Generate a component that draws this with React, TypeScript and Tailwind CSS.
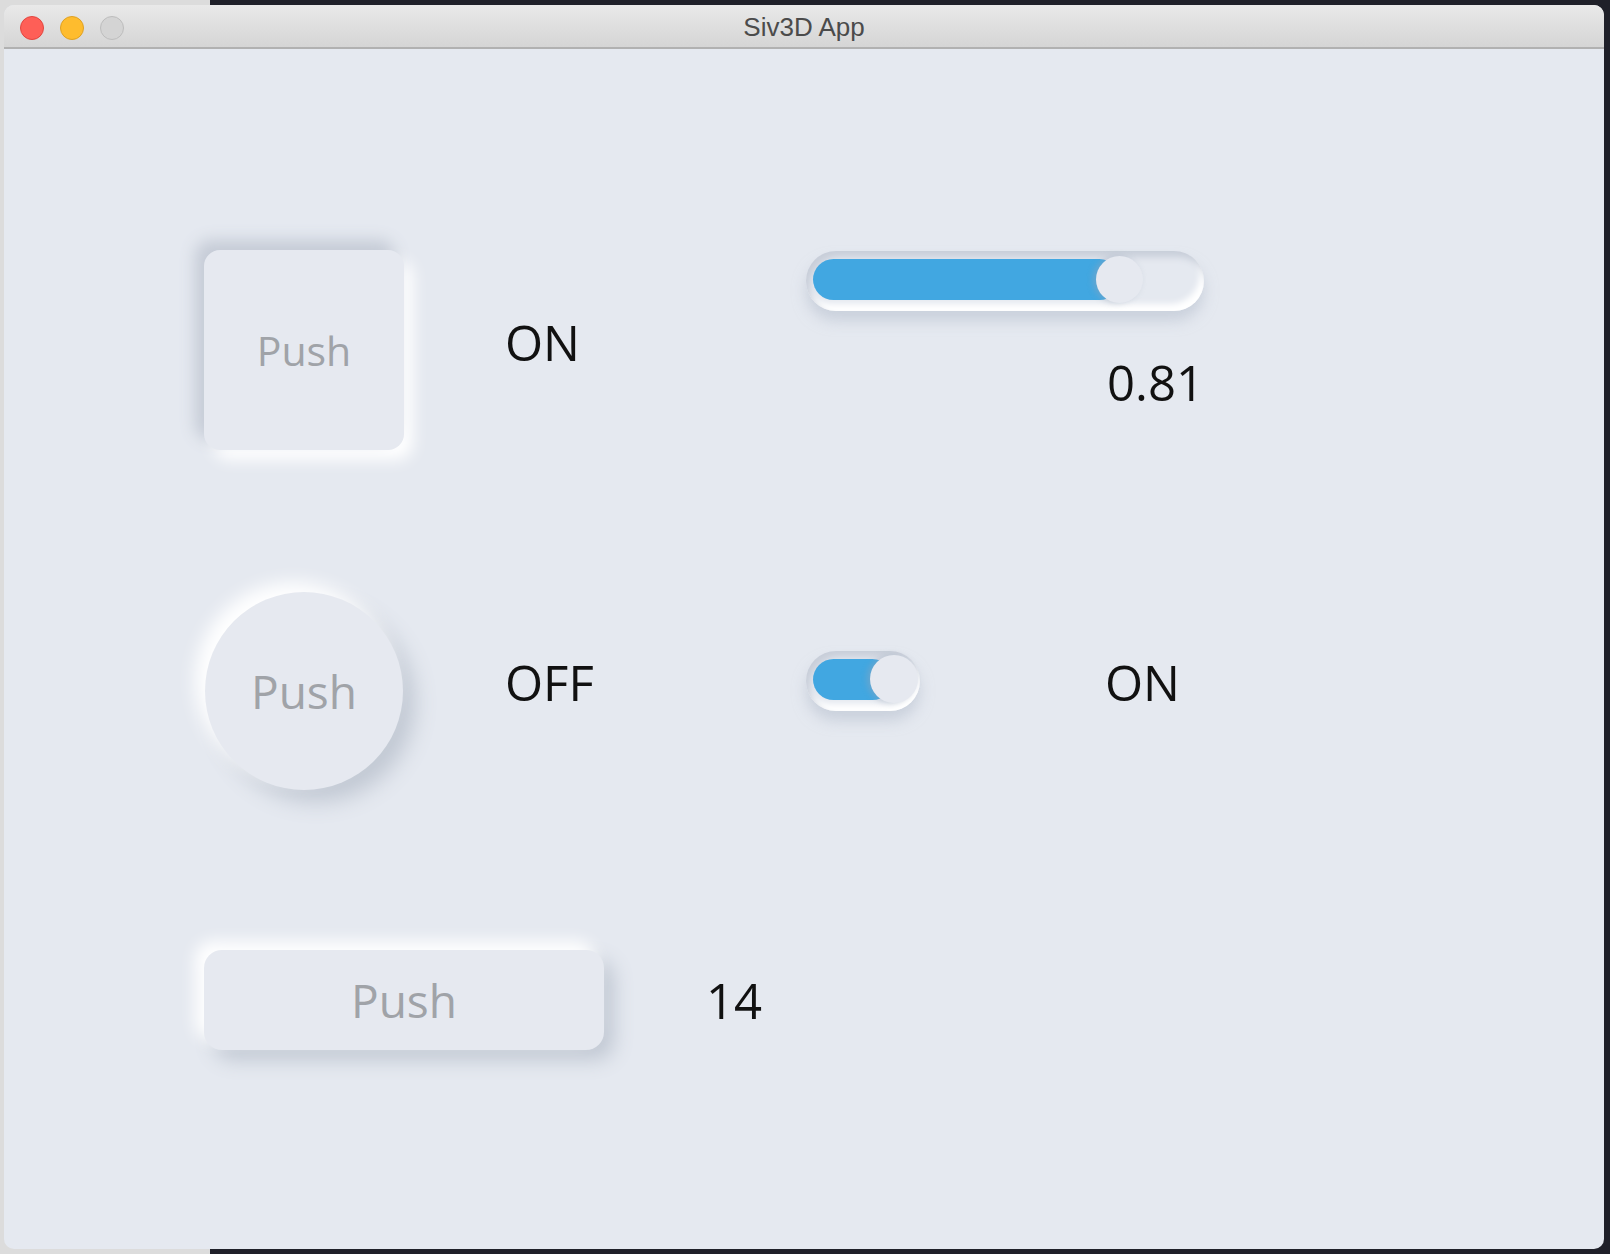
const font = "font-['Open_Sans',sans-serif]";

function TitleBar() {
  return (
    <div className="flex h-[44px] shrink-0 items-center border-b-2 border-[#b1b1b1] bg-[linear-gradient(#e9e9e9,#d5d5d5)] pt-[3px] pl-[16px]">
      <div className="flex gap-[16px]">
        <span className="h-[24px] w-[24px] rounded-full border border-[#e2463f] bg-[#fe5f57]" />
        <span className="h-[24px] w-[24px] rounded-full border border-[#dfa123] bg-[#febc2e]" />
        <span className="h-[24px] w-[24px] rounded-full border border-[#bdbdbd] bg-[#d4d4d4]" />
      </div>
      <div className="flex-1 pr-[120px] text-center font-['Liberation_Sans',Arial,sans-serif] text-[26px] text-[#4b4b4b]">
        Siv3D App
      </div>
    </div>
  );
}

function Label({ text, className = "" }: { text: string; className?: string }) {
  return (
    <div className={`${font} text-[49px] leading-none text-[#111] ${className}`}>
      {text}
    </div>
  );
}

function Slider({ value }: { value: number }) {
  return (
    <div className="mt-px h-[60px] w-[398px] rounded-full pt-[8px] pl-[7px] shadow-[inset_4px_6px_7px_#c8ced9,inset_-4px_-7px_6px_#ffffff,0_10px_14px_rgba(180,189,204,0.55)]">
      <div className="relative h-[41px] w-[382px] rounded-full">
        <div
          className="h-full rounded-full bg-[#41a7e1]"
          style={{ width: `${value * 382 - 2}px` }}
        />
        <div
          className="absolute top-[-3px] h-[47px] w-[47px] rounded-full bg-[#e6e9f0] shadow-[-3px_0_6px_rgba(150,165,185,0.45)]"
          style={{ left: `${value * 382 - 26}px` }}
        />
      </div>
    </div>
  );
}

function Toggle() {
  return (
    <div className="h-[60px] w-[114px] rounded-full pt-[8px] pl-[7px] shadow-[inset_4px_6px_7px_#c8ced9,inset_-4px_-7px_6px_#ffffff,0_10px_14px_rgba(180,189,204,0.55)]">
      <div className="relative h-[41px] w-[100px] rounded-full">
        <div className="h-full w-[80px] rounded-full bg-[#41a7e1]" />
        <div className="absolute top-[-4px] left-[57px] h-[48px] w-[48px] rounded-full bg-[#e6e9f0] shadow-[-3px_0_6px_rgba(150,165,185,0.45)]" />
      </div>
    </div>
  );
}

export default function App() {
  return (
    <div className="h-[1254px] w-[1610px] bg-[linear-gradient(to_right,#dcdcdc_210px,#1f2029_210px)] pt-[5px] pl-[4px]">
      <div className="flex h-[1244px] w-[1600px] flex-col overflow-hidden rounded-[10px] bg-[#e5e9f0]">
        <TitleBar />
        <div className="flex flex-col pt-[201px] pl-[200px]">
          {/* row 1 */}
          <div className="flex items-start">
            <div className="w-[301px]">
              <button
                className={`flex h-[200px] w-[200px] items-center justify-center rounded-[16px] bg-[#e6e9f0] ${font} text-[41px] leading-none text-[#a0a3a8] shadow-[-9px_-10px_16px_#c5cbd6,9px_10px_16px_#ffffff]`}
              >
                Push
              </button>
            </div>
            <Label text="ON" className="w-[301px] pt-[68px]" />
            <div className="flex w-[398px] flex-col">
              <Slider value={0.81} />
              <Label text="0.81" className="mt-[47px] text-right" />
            </div>
          </div>

          {/* row 2 */}
          <div className="mt-[142px] flex items-start">
            <div className="w-[301px] pl-px">
              <button
                className={`flex h-[198px] w-[198px] items-center justify-center rounded-full bg-[#e6e9f0] ${font} text-[46px] leading-none text-[#a0a3a8] shadow-[-10px_-10px_18px_#ffffff,12px_12px_22px_#c1c8d3]`}
              >
                Push
              </button>
            </div>
            <Label text="OFF" className="w-[301px] pt-[66px]" />
            <div className="w-[299px] pt-[59px]">
              <Toggle />
            </div>
            <Label text="ON" className="pt-[66px]" />
          </div>

          {/* row 3 */}
          <div className="mt-[160px] flex items-start">
            <button
              className={`flex h-[100px] w-[400px] items-center justify-center rounded-[18px] bg-[#e6e9f0] ${font} text-[46px] leading-none text-[#a0a3a8] shadow-[-9px_-9px_16px_#ffffff,10px_10px_20px_#c1c8d3]`}
            >
              Push
            </button>
            <Label text="14" className="ml-[102px] pt-[26px]" />
          </div>
        </div>
      </div>
    </div>
  );
}
